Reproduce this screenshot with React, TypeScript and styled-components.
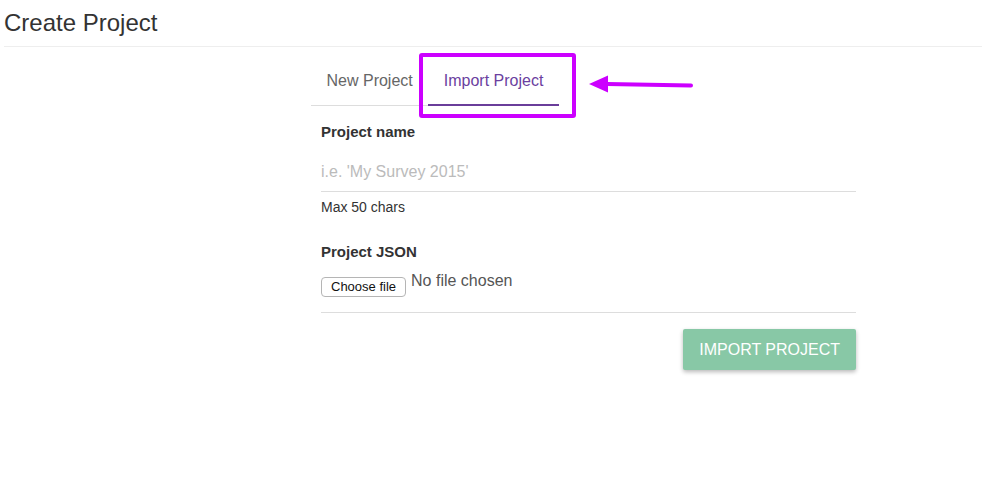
import React from "react";
import styled, { createGlobalStyle } from "styled-components";

const Global = createGlobalStyle`
  html, body { margin: 0; padding: 0; background: #fff; }
  body { font-family: "Liberation Sans", Arial, sans-serif; color: #333; }
  * { box-sizing: border-box; }
`;

const Page = styled.div`
  width: 982px;
  height: 488px;
  padding-left: 4px;
  overflow: hidden;
`;

const Title = styled.h1`
  margin: 0;
  padding-top: 9px;
  font-size: 24px;
  line-height: 28px;
  font-weight: 400;
  color: #333;
`;

const Rule = styled.hr`
  margin: 9px 0 0;
  border: 0;
  border-top: 1px solid #eee;
  height: 0;
`;

const Column = styled.div`
  width: 555px;
  margin-left: 307px;
`;

const TabArea = styled.div`
  position: relative;
  margin-top: 10px;
`;

const TabBar = styled.div`
  display: inline-flex;
  border-bottom: 1px solid #ddd;
`;

const Tab = styled.div<{ $active?: boolean }>`
  padding: 14px 15.5px 13px;
  margin-bottom: -1px;
  font-size: 16px;
  line-height: 20px;
  color: ${(p) => (p.$active ? "#6b3fa0" : "#666")};
  border-bottom: 2px solid ${(p) => (p.$active ? "#6a3d9a" : "transparent")};
  cursor: pointer;
`;

const Highlight = styled.div`
  position: absolute;
  left: 108px;
  top: -4px;
  width: 157px;
  height: 65px;
  border: 4px solid #cc00ff;
  border-radius: 3px;
  pointer-events: none;
`;

const Arrow = styled.svg`
  position: absolute;
  left: 276px;
  top: 18px;
`;

const Form = styled.form`
  padding: 16px 10px 0;
  display: flex;
  flex-direction: column;
`;

const Label = styled.label<{ $gap?: number }>`
  font-size: 15px;
  line-height: 20px;
  font-weight: 700;
  color: #333;
  margin-top: ${(p) => p.$gap ?? 0}px;
`;

const TextInput = styled.input`
  margin-top: 8px;
  padding: 12px 0 9px;
  border: 0;
  border-bottom: 1px solid #ddd;
  font-family: inherit;
  font-size: 16px;
  line-height: 20px;
  height: 42px;
  color: #333;
  outline: none;
  &::placeholder { color: #bbb; }
`;

const Help = styled.div`
  margin-top: 5px;
  font-size: 14px;
  line-height: 20px;
  color: #333;
`;

const FileRow = styled.div`
  margin-top: 9px;
  display: flex;
  align-items: flex-start;
  gap: 5px;
`;

const FileButton = styled.button`
  margin-top: 6px;
  height: 20px;
  padding: 0 9px;
  border: 1px solid #b5b5b5;
  border-radius: 4px;
  background: #fff;
  font-family: inherit;
  font-size: 13px;
  line-height: 18px;
  color: #111;
`;

const FileName = styled.span`
  font-size: 16px;
  line-height: 20px;
  color: #555;
`;

const Divider = styled.div`
  margin-top: 15px;
  border-top: 1px solid #ddd;
`;

const Actions = styled.div`
  display: flex;
  justify-content: flex-end;
  margin-top: 16px;
`;

const Submit = styled.button`
  height: 41px;
  padding: 0 16px;
  border: 0;
  border-radius: 2px;
  background: #88c8a6;
  color: #fff;
  font-family: inherit;
  font-size: 16px;
  text-transform: uppercase;
  box-shadow: 0 2px 4px rgba(0, 0, 0, 0.28);
`;

export default function App() {
  return (
    <Page>
      <Global />
      <Title>Create Project</Title>
      <Rule />
      <Column>
        <TabArea>
          <TabBar>
            <Tab>New Project</Tab>
            <Tab $active>Import Project</Tab>
          </TabBar>
          <Highlight />
          <Arrow width="108" height="22" viewBox="0 0 108 22">
            <line x1="20" y1="9" x2="104" y2="10.5" stroke="#cc00ff" strokeWidth="4" strokeLinecap="round" />
            <polygon points="2,9 21,0.5 21,17.5" fill="#cc00ff" />
          </Arrow>
        </TabArea>
        <Form onSubmit={(e) => e.preventDefault()}>
          <Label>Project name</Label>
          <TextInput placeholder="i.e. 'My Survey 2015'" />
          <Help>Max 50 chars</Help>
          <Label $gap={25}>Project JSON</Label>
          <FileRow>
            <FileButton type="button">Choose file</FileButton>
            <FileName>No file chosen</FileName>
          </FileRow>
          <Divider />
          <Actions>
            <Submit type="submit">Import Project</Submit>
          </Actions>
        </Form>
      </Column>
    </Page>
  );
}
